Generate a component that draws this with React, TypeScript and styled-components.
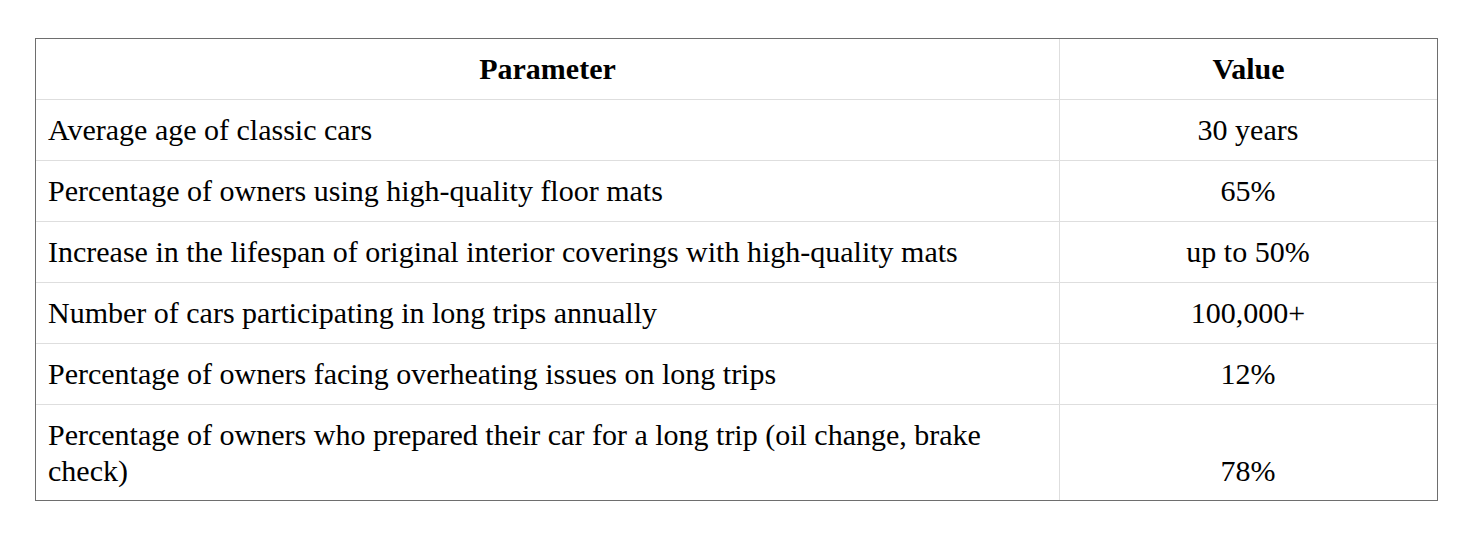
import React from "react";
import styled, { createGlobalStyle } from "styled-components";

const GlobalStyle = createGlobalStyle`
  html, body {
    margin: 0;
    padding: 0;
    background: #ffffff;
  }
  body {
    font-family: "Liberation Serif", "Times New Roman", serif;
    color: #000000;
  }
`;

const Page = styled.div`
  padding: 38px 42px 0 35px;
`;

const Table = styled.table`
  width: 1403px;
  table-layout: fixed;
  border-collapse: separate;
  border-spacing: 0;
  border: 1px solid #6e6e6e;
  font-family: "Liberation Serif", "Times New Roman", serif;
  font-size: 30px;
  line-height: 36px;
`;

const Col = styled.col<{ $width: string }>`
  width: ${(p) => p.$width};
`;

const Cell = styled.td<{ $center?: boolean; $last?: boolean; $lastRow?: boolean }>`
  padding: ${(p) => (p.$lastRow ? "12px 13px 11px 12px" : "12px 13px 12px 12px")};
  text-align: ${(p) => (p.$center ? "center" : "left")};
  vertical-align: bottom;
  border-right: ${(p) => (p.$last ? "none" : "1px solid #dedede")};
  border-bottom: ${(p) => (p.$lastRow ? "none" : "1px solid #dedede")};
`;

const HeadCell = styled.th<{ $last?: boolean }>`
  padding: 12px 12px 12px 12px;
  text-align: center;
  vertical-align: bottom;
  font-weight: bold;
  border-right: ${(p) => (p.$last ? "none" : "1px solid #dedede")};
  border-bottom: 1px solid #dedede;
`;

const rows: [string, string][] = [
  ["Average age of classic cars", "30 years"],
  ["Percentage of owners using high-quality floor mats", "65%"],
  ["Increase in the lifespan of original interior coverings with high-quality mats", "up to 50%"],
  ["Number of cars participating in long trips annually", "100,000+"],
  ["Percentage of owners facing overheating issues on long trips", "12%"],
  ["Percentage of owners who prepared their car for a long trip (oil change, brake check)", "78%"],
];

export default function App() {
  return (
    <>
      <GlobalStyle />
      <Page>
        <Table>
          <colgroup>
            <Col $width="1024px" />
            <Col $width="377px" />
          </colgroup>
          <thead>
            <tr>
              <HeadCell>Parameter</HeadCell>
              <HeadCell $last>Value</HeadCell>
            </tr>
          </thead>
          <tbody>
            {rows.map(([param, value], i) => {
              const lastRow = i === rows.length - 1;
              return (
                <tr key={param}>
                  <Cell $lastRow={lastRow}>{param}</Cell>
                  <Cell $center $last $lastRow={lastRow}>
                    {value}
                  </Cell>
                </tr>
              );
            })}
          </tbody>
        </Table>
      </Page>
    </>
  );
}
